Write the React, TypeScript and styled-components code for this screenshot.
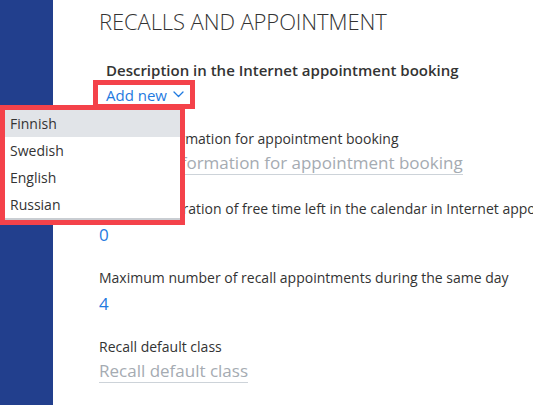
import React from 'react';
import styled, { createGlobalStyle } from 'styled-components';

const LANGUAGES = ['Finnish', 'Swedish', 'English', 'Russian'];

const GlobalStyle = createGlobalStyle`
  html, body {
    margin: 0;
    padding: 0;
    background: #ffffff;
    overflow: hidden;
  }
  body {
    font-family: 'Open Sans', 'Noto Sans', sans-serif;
    color: #333333;
  }
`;

const Page = styled.div`
  position: relative;
  display: flex;
  width: 533px;
  height: 405px;
  overflow: hidden;
`;

const Sidebar = styled.div`
  flex: 0 0 53px;
  background: #223f8d;
`;

const Main = styled.div`
  flex: 1;
  display: flex;
  flex-direction: column;
  padding: 7px 0 0 46px;
  white-space: nowrap;
`;

const Title = styled.h1`
  margin: 0;
  font-size: 22px;
  font-weight: 300;
  line-height: 28px;
  color: #333;
  letter-spacing: -0.1px;
`;

const Booking = styled.div`
  display: flex;
  flex-direction: column;
  align-items: flex-start;
  padding-left: 7px;
  margin-top: 25px;
`;

const SubTitle = styled.div`
  font-size: 15px;
  font-weight: 600;
  line-height: 20px;
  color: #333;
`;

const AddNew = styled.button`
  display: inline-flex;
  align-items: center;
  gap: 6px;
  margin: 0 0 0 -13px;
  padding: 0 6px 0 8px;
  height: 29px;
  border: 5px solid #f4424a;
  background: #fff;
  color: #1f7ae0;
  font-family: inherit;
  font-size: 15px;
  cursor: pointer;
`;

const Menu = styled.ul`
  position: absolute;
  left: 0;
  top: 105px;
  width: 175px;
  margin: 0;
  padding: 0 0 2px;
  list-style: none;
  background: #fff;
  border: 5px solid #f4424a;
  box-shadow: inset 0 -2px 0 #c9cdd2;
`;

const MenuItem = styled.li<{ $active?: boolean }>`
  height: 27px;
  line-height: 27px;
  padding-left: 5px;
  font-size: 14px;
  color: #333;
  background: ${(p) => (p.$active ? '#e1e4e8' : 'transparent')};
`;

const Field = styled.div<{ $gap: number }>`
  display: flex;
  flex-direction: column;
  align-items: flex-start;
  margin-top: ${(p) => p.$gap}px;
`;

const Label = styled.div`
  font-size: 14px;
  line-height: 20px;
  color: #333;
`;

const Value = styled.div`
  margin-top: 3px;
  font-size: 17px;
  line-height: 26px;
  color: #1f7ae0;
`;

const Placeholder = styled.div`
  margin-top: 3px;
  font-size: 17px;
  line-height: 22px;
  color: #a5abb2;
  border-bottom: 1px solid #cdd3d9;
`;

const Chevron = () => (
  <svg width="11" height="7" viewBox="0 0 11 7" fill="none">
    <polyline
      points="1,1 5.5,5.5 10,1"
      stroke="#1f7ae0"
      strokeWidth="1.3"
      strokeLinecap="round"
      strokeLinejoin="round"
    />
  </svg>
);

const App: React.FC = () => (
  <Page>
    <GlobalStyle />
    <Sidebar />
    <Main>
      <Title>RECALLS AND APPOINTMENT</Title>
      <Booking>
        <SubTitle>Description in the Internet appointment booking</SubTitle>
        <AddNew>
          Add new <Chevron />
        </AddNew>
      </Booking>
      <Field $gap={20}>
        <Label>General information for appointment booking</Label>
        <Placeholder>General information for appointment booking</Placeholder>
      </Field>
      <Field $gap={24}>
        <Label>
          Minimum duration of free time left in the calendar in Internet
          appointment booking
        </Label>
        <Value>0</Value>
      </Field>
      <Field $gap={20}>
        <Label>Maximum number of recall appointments during the same day</Label>
        <Value>4</Value>
      </Field>
      <Field $gap={20}>
        <Label>Recall default class</Label>
        <Placeholder>Recall default class</Placeholder>
      </Field>
    </Main>
    <Menu>
      {LANGUAGES.map((lang, i) => (
        <MenuItem key={lang} $active={i === 0}>
          {lang}
        </MenuItem>
      ))}
    </Menu>
  </Page>
);

export default App;
